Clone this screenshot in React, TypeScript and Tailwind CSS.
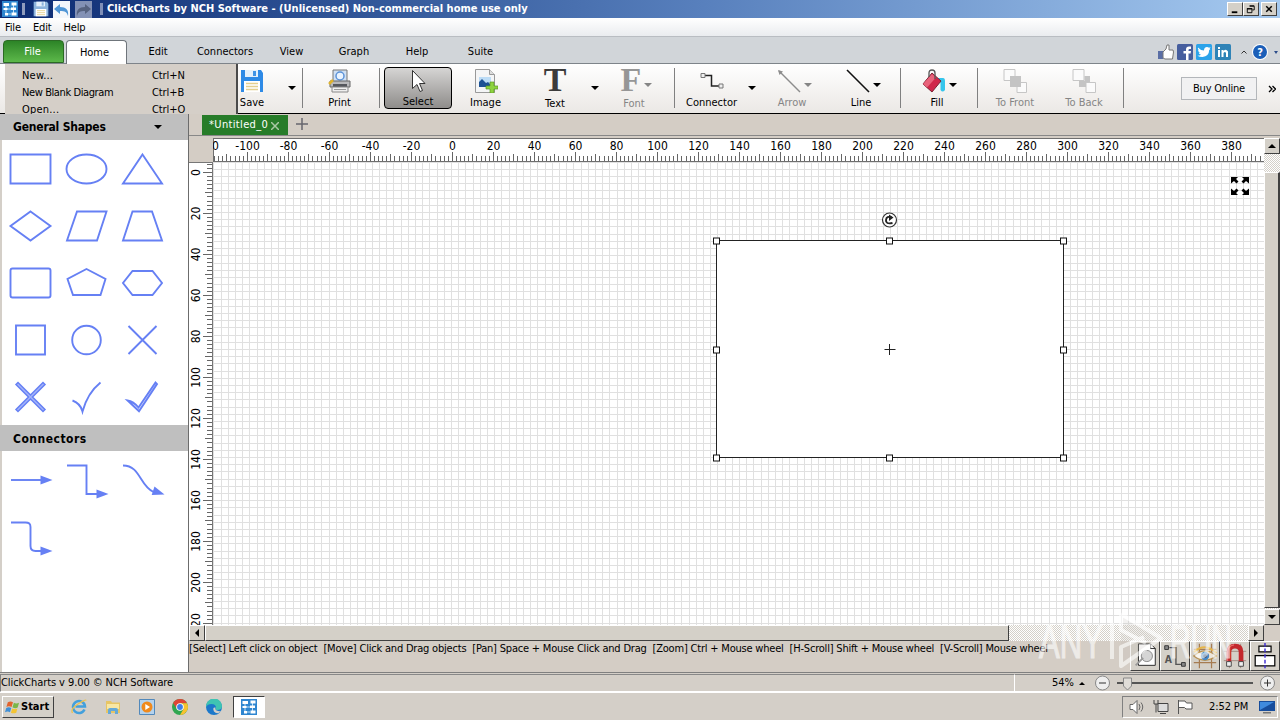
import type { ReactNode } from 'react';
import clsx from 'clsx';

const BLUE = '#6680f4';

const range = (from: number, to: number, step: number) => {
  const out: number[] = [];
  for (let i = from; i <= to; i += step) out.push(i);
  return out;
};

function AppLogo({ className }: { className?: string }) {
  return (
    <svg viewBox="0 0 16 16" className={clsx('shrink-0', className)}>
      <rect width="16" height="16" fill="#2f86d0" />
      <path d="M4 4v10M11.500 3v9M4 8h7M4 13h5" stroke="#bfe0f8" fill="none" />
      <path d="M1.500 2h5.500v3h-5.500zM9.500 1.500h5v3h-5zM1.500 7h4v2h-4zM9 6.500h5v2.500h-5zM9.500 11.500h5v3h-5zM3 12h3v2.500H3z" fill="#fff" />
    </svg>
  );
}

function FloppyIcon({ className, dim }: { className?: string; dim?: boolean }) {
  return (
    <svg viewBox="0 0 24 24" className={clsx('shrink-0', className)}>
      <path d="M1 1h20l2 3v19H1z" fill={dim ? '#8db4dc' : '#2e8ae6'} />
      <path d="M5 1h13v7H5z" fill="#e4f0fb" />
      <path d="M13 2h3v5h-3z" fill={dim ? '#8db4dc' : '#3f93e6'} />
      <path d="M4 12h16v11H4z" fill="#fff" />
      <path d="M6 14.500h12M6 17.500h12M6 20.500h12" stroke="#e3cf8f" strokeWidth="1.300" />
    </svg>
  );
}

function Caret({ className }: { className?: string }) {
  return (
    <svg viewBox="0 0 8 4" className={clsx('h-1 w-2 shrink-0', className)}>
      <path d="M0 0h8L4 4z" fill="currentColor" />
    </svg>
  );
}

function TitleBar() {
  return (
    <div className="flex h-[18px] items-center bg-linear-to-r from-[#0c2a72] via-[#5880bd] via-55% to-[#a6caf0] pl-0.5 pr-[3px]">
      <AppLogo className="h-4 w-4" />
      <div className="ml-1 mr-2 h-3 w-[3px] bg-[#8f9cbd]" />
      <FloppyIcon className="h-4 w-4" dim />
      <svg viewBox="0 0 17 17" className="ml-1 h-[17px] w-[17px]">
        <rect width="17" height="17" fill="#f4f7fb" />
        <path d="M1 8l6-5v3c6 0 9 3 8 9-1-4-3-5-8-5v3z" fill="#5096d6" />
      </svg>
      <svg viewBox="0 0 17 17" className="ml-[5px] h-[17px] w-[17px]">
        <rect width="17" height="17" fill="#8391b5" />
        <path d="M16 8l-6-5v3c-6 0-9 3-8 9 1-4 3-5 8-5v3z" fill="#56627f" />
      </svg>
      <div className="ml-2 mr-1 h-3 w-[3px] bg-[#7f8fb8]" />
      <span className="whitespace-nowrap text-[11px] font-bold text-white">
        ClickCharts by NCH Software - (Unlicensed) Non-commercial home use only
      </span>
      <div className="ml-auto flex">
        <WinButton>
          <path d="M4 10h6" strokeWidth="2" />
        </WinButton>
        <WinButton>
          <path d="M6 3.500h5v4H9M3.500 6.500h5v4h-5zM6 3h5M3 6h6" />
        </WinButton>
        <WinButton className="ml-0.5">
          <path d="M4.500 3.500l6 6M10.500 3.500l-6 6" strokeWidth="1.600" />
        </WinButton>
      </div>
    </div>
  );
}

function WinButton({ children, className }: { children: ReactNode; className?: string }) {
  return (
    <div className={clsx('h-[14px] w-4 border border-b-[#404040] border-l-white border-r-[#404040] border-t-white bg-[#d4d0c8]', className)}>
      <svg viewBox="0 0 15 13" className="h-3 w-[14px]" fill="none" stroke="#000">
        {children}
      </svg>
    </div>
  );
}

function MenuBar() {
  return (
    <div className="flex h-[19px] items-center gap-3 border-b border-[#b9bdc2] bg-linear-to-b from-white to-[#eaecef] pl-[5px] pt-0.5 text-[11px] tracking-[-0.15px]">
      <span>File</span>
      <span>Edit</span>
      <span>Help</span>
    </div>
  );
}

function RibbonTabs() {
  return (
    <div className="flex h-[27px] items-end border-b border-[#7e848a] bg-[#d1d5d9] pl-[3px] text-[11px]">
      <div className="flex h-[23px] w-[61px] items-center justify-center rounded-t border border-[#2b6a24] bg-linear-to-b from-[#2c8427] to-[#5cb84a] pr-0.5 pt-0.5 text-white">
        File
      </div>
      <div className="-mb-px ml-0.5 flex h-6 w-[61px] items-center justify-center rounded-t border border-b-0 border-[#6f757b] bg-white pr-1 pt-px">
        Home
      </div>
      <div className="flex h-[23px] items-center pt-0.5 text-center">
        <span className="w-[62px]">Edit</span>
        <span className="w-[72px]">Connectors</span>
        <span className="w-[61px]">View</span>
        <span className="w-[64px]">Graph</span>
        <span className="w-[62px]">Help</span>
        <span className="w-[65px]">Suite</span>
      </div>
      <div className="mb-[3px] ml-auto flex items-center pr-0.5">
        <svg viewBox="0 0 16 16" className="h-4 w-4">
          <path d="M0 7h5v8H0z" fill="#5a6ea5" />
          <path d="M5 8l3-3 1-4h2v5h4l.500 2-1 7H7l-2-1z" fill="#fff" stroke="#777" />
        </svg>
        <svg viewBox="0 0 16 16" className="ml-[3px] h-4 w-4">
          <rect width="16" height="16" rx="1.500" fill="#465e9e" />
          <path d="M9 16V9.500H6.500V7H9V5.500Q9 2.500 12 2.500h2V5h-1.300q-1.200 0-1.200 1v1H14l-.400 2.500h-2.100V16z" fill="#fff" />
        </svg>
        <svg viewBox="0 0 16 16" className="ml-[3px] h-4 w-4">
          <rect width="16" height="16" rx="1.500" fill="#2ba3ea" />
          <path d="M2 3.500q2.500 3 6 3Q8 3 11 3q1.300 0 2 .800l1.600-.500-1 1.500.900.300-1.300 1Q13 12.500 6.500 13 3.500 13 1.500 11.700q2.300 0 3.500-1-2-.400-2.300-2h1.200Q2 7.500 2 6l1 .300Q1.300 5 2 3.500z" fill="#fff" />
        </svg>
        <svg viewBox="0 0 16 16" className="ml-[3px] h-4 w-4">
          <rect width="16" height="16" rx="1.500" fill="#2f83b7" />
          <path d="M3 6h2v7H3zM3 3h2v2H3zM6.500 6h2v1q2.500-2.500 4.500.500V13h-2V9q-1-2-2.500 0v4h-2z" fill="#fff" />
        </svg>
        <svg viewBox="0 0 6 4" className="ml-[10px] h-1 w-1.5">
          <path d="M.5 3.500L3 1l2.500 2.500" fill="none" stroke="#333" />
        </svg>
        <div className="ml-[6px] flex h-[14px] w-[14px] items-center justify-center rounded-full bg-[#1c5fb8] text-[11px] font-bold leading-none text-white ring-1 ring-white">
          ?
        </div>
        <svg viewBox="0 0 4 3" className="ml-[7px] h-[3px] w-1">
          <path d="M0 0h4L2 3z" fill="#2b4c8a" />
        </svg>
      </div>
    </div>
  );
}

type ToolProps = { label: string; className: string; icon: ReactNode; muted?: boolean; caret?: boolean; active?: boolean };

function Tool({ label, className, icon, muted, caret, active }: ToolProps) {
  return (
    <div
      className={clsx(
        'flex h-[42px] shrink-0 flex-col items-center text-[11px]',
        muted ? 'text-[#858585]' : 'text-black',
        active && 'rounded border border-black bg-linear-to-b from-[#d6d5d4] to-[#8f8d8b]',
        className,
      )}
    >
      <div className={clsx('flex items-center', active ? 'h-[28px]' : 'h-[29px]', caret && 'gap-[3px] pl-1')}>
        {icon}
        {caret && <Caret className="mt-2" />}
      </div>
      <span className="mt-px whitespace-nowrap leading-[13px]">{label}</span>
    </div>
  );
}

function Separator({ className }: { className?: string }) {
  return <div className={clsx('h-10 w-px shrink-0 bg-[#808080]', className)} />;
}

function StackIcon({ front }: { front?: boolean }) {
  return (
    <svg viewBox="0 0 24 24" className="h-6 w-6">
      <path d="M1 .5h11v11H1zM14 13.500h9.500v10H14z" fill="#fbfbfb" stroke="#c6c6c6" />
      <path d={front ? 'M7 7h11v11H7z' : 'M12.500 7H18v6h-4v5H7v-6h5.500z'} fill="#c4c4c4" />
    </svg>
  );
}

function Toolbar() {
  return (
    <div className="flex h-[50px] border-b border-black bg-linear-to-b from-white to-[#ebe8e5]">
      <div className="ml-[5px] flex h-[50px] w-[233px] shrink-0 flex-col overflow-hidden border-r-2 border-[#4a4a4a] bg-[#d5cfc8] pl-[17px] pt-[3px] text-[11px] leading-[17px]">
        {[
          ['New...', 'Ctrl+N'],
          ['New Blank Diagram', 'Ctrl+B'],
          ['Open...', 'Ctrl+O'],
        ].map(([name, key]) => (
          <div key={name} className="flex shrink-0">
            <span className={clsx('w-[130px]', name.length > 10 ? 'tracking-[-0.4px]' : 'tracking-[0.2px]')}>{name}</span>
            <span className="tracking-[-0.1px]">{key}</span>
          </div>
        ))}
      </div>
      <div className="flex grow items-center pb-0.5">
        <Tool label="Save" className="w-[28px]" icon={<FloppyIcon className="h-6 w-6" />} />
        <Caret className="ml-[22px] mr-[6px]" />
        <Separator />
        <Tool
          label="Print"
          className="w-[73px]"
          icon={
            <svg viewBox="0 0 24 24" className="h-6 w-6">
              <path d="M5 1h14v12H5z" fill="#cfe0f4" stroke="#777" />
              <circle cx="12" cy="7" r="4" fill="#eaf4ff" stroke="#5c93d8" strokeWidth="1.500" />
              <path d="M2 12h20v6H2z" fill="#b9b9bb" stroke="#666" />
              <path d="M5 15h14v3H5z" fill="#55575c" />
              <path d="M4 18h16v5H4z" fill="#efefef" stroke="#888" />
              <path d="M6 20.500h12" stroke="#999" />
              <path d="M1 15l4-4" stroke="#e0b32c" strokeWidth="2.500" />
            </svg>
          }
        />
        <Separator className="ml-[3px] mr-1" />
        <Tool
          label="Select"
          active
          className="w-[68px]"
          icon={
            <svg viewBox="0 0 16 24" className="h-6 w-4">
              <path d="M2.500 1.500v18l4.500-4 3 7 2.500-1-3-7H15z" fill="#fff" stroke="#333" />
            </svg>
          }
        />
        <Tool
          label="Image"
          className="w-[67px]"
          icon={
            <svg viewBox="0 0 24 24" className="h-6 w-6">
              <path d="M1.500.5h14l5 5v18h-19z" fill="#f4f5f6" stroke="#999" />
              <path d="M15.500.5v5h5" fill="#ddd" stroke="#999" />
              <path d="M5 8h12v10H5z" fill="#bcdcf6" />
              <path d="M5 18v-5l3-3 4 4 2-1 3 3v2z" fill="#1d5293" />
              <path d="M16 13h4v4h4v3h-4v4h-4v-4h-4v-3h4z" fill="#8ed33f" stroke="#5d9a24" strokeWidth=".7" />
            </svg>
          }
        />
        <Tool
          label="Text"
          className="w-[72px]"
          icon={<span className="mb-1 font-['Liberation_Serif',serif] text-[34px] font-bold leading-[25px] text-[#3b3b3b]">T</span>}
        />
        <Caret className="mr-1" />
        <Tool
          label="Font"
          muted
          caret
          className="w-[62px]"
          icon={<span className="mb-1 w-5 text-center font-['Liberation_Serif',serif] text-[34px] font-bold leading-[25px] text-[#969696]">F</span>}
        />
        <Separator className="ml-[9px]" />
        <Tool
          label="Connector"
          className="w-[73px]"
          icon={
            <svg viewBox="0 0 24 24" className="h-6 w-6" fill="none" stroke="#222">
              <path d="M5 6.500h6.500V17H19" strokeWidth="1.500" />
              <path d="M1 4.500h4v4H1zM19 15h4v4h-4z" stroke="#777" fill="#eee" />
            </svg>
          }
        />
        <Caret />
        <Tool
          label="Arrow"
          muted
          caret
          className="w-[72px]"
          icon={
            <svg viewBox="0 0 24 24" className="h-6 w-6">
              <path d="M2 2l21 21" stroke="#8c8c8c" strokeWidth="1.500" />
              <path d="M1 1l5 1.500L2.500 6z" fill="#8c8c8c" />
            </svg>
          }
        />
        <Tool
          label="Line"
          caret
          className="w-[66px]"
          icon={
            <svg viewBox="0 0 24 24" className="h-6 w-6">
              <path d="M1 1l22 22" stroke="#111" strokeWidth="1.600" />
            </svg>
          }
        />
        <Separator className="ml-[6px]" />
        <Tool
          label="Fill"
          caret
          className="w-[72px]"
          icon={
            <svg viewBox="0 0 24 24" className="h-6 w-6">
              <path d="M16 9h5q2 0 2 3v9q-2.500 3-4.500 0v-7z" fill="#35c5ec" />
              <path d="M10 4l9 8-9 11-9-8z" fill="#d02749" stroke="#7a2334" />
              <path d="M10 5l4 3.500-9 10-4-3.500z" fill="#e8637b" />
              <path d="M7 8V4q0-3 3-3t3 3v6" fill="none" stroke="#555" strokeWidth="1.300" />
            </svg>
          }
        />
        <Separator className="ml-1" />
        <Tool label="To Front" muted className="w-[74px]" icon={<StackIcon front />} />
        <Tool label="To Back" muted className="w-[64px]" icon={<StackIcon />} />
        <Separator className="ml-[7px]" />
        <button className="ml-[57px] mt-0.5 h-[23px] w-[76px] shrink-0 border border-[#b3b6ba] bg-[#f1f1f2] pt-px text-[11px] tracking-[-0.2px]">
          Buy Online
        </button>
        <svg viewBox="0 0 8 8" className="ml-[11px] mt-0.5 h-2 w-2 shrink-0">
          <path d="M1 1l3 3-3 3M4.500 1l3 3-3 3" fill="none" stroke="#000" strokeWidth="1.300" />
        </svg>
      </div>
    </div>
  );
}

const shapes: ReactNode[] = [
  <path d="M-20-14.500h40v29h-40z" />,
  <ellipse rx="20" ry="14.500" />,
  <path d="M0-14.500L19.500 14.500h-39z" />,
  <path d="M0-14.500L20 0 0 14.500-20 0z" />,
  <path d="M-9.500-14.500H20L10.500 14.500h-30z" />,
  <path d="M-10-14.500H9.500L19.500 14.500h-39z" />,
  <rect x="-20" y="-14.500" width="40" height="29" rx="2" />,
  <path d="M0-14L19-4 14 12h-27.500L-19-4z" />,
  <path d="M-10-12H10L19.500 0 10 12h-20L-19.500 0z" />,
  <path d="M-14.500-14.500h29v29h-29z" />,
  <circle r="14.300" />,
  <path d="M-14-14l28 28M14-14l-28 28" />,
  <path strokeWidth="1.500" d="M-12.500-14.500L0-2 12.500-14.500l2 2L2 0l12.500 12.500-2 2L0 2-12.500 14.500l-2-2L-2 0l-12.500-12.500z" fill="#a3b3fa" />,
  <path d="M-14 3.500q8 3 10 11Q1-4 14-14.500" />,
  <path d="M-15 3.500q6 1 11 7L13-14.500l1.500 1.500L-3.500 14.300z" fill="#dbe1fd" />,
];

function Arrowhead({ x, y, rotate = 0 }: { x: number; y: number; rotate?: number }) {
  return <path d="M0 0l-12-4.500v9z" fill={BLUE} stroke="none" transform={`translate(${x} ${y}) rotate(${rotate})`} />;
}

const connectors: ReactNode[] = [
  <>
    <path d="M-19.500 0H12" />
    <Arrowhead x={22} y={0} />
  </>,
  <>
    <path d="M-19.500-14.500H0v28.500h12" />
    <Arrowhead x={22} y={14} />
  </>,
  <>
    <path d="M-19.500-14.500C-2-14.500-3 6 11 12" />
    <Arrowhead x={22} y={14.5} rotate={18} />
  </>,
  <>
    <path d="M-19.500-14.500H-5Q0-14.500 0-10V9q0 5 5 5h7" />
    <Arrowhead x={22} y={14} />
  </>,
];

function ShapeGrid({ items }: { items: ReactNode[] }) {
  return (
    <div className="grid grid-cols-[56px_56px_56px]">
      {items.map((item, i) => (
        <svg key={i} viewBox="-28.500 -29 56 57" className="h-[57px] w-14" fill="none" stroke={BLUE} strokeWidth="1.900">
          {item}
        </svg>
      ))}
    </div>
  );
}

function Sidebar() {
  return (
    <div className="flex h-[558px] w-[189px] shrink-0 flex-col border-r border-[#6c6c6c] bg-white">
      <div className="flex h-[26px] shrink-0 items-center bg-[#bfbfbf] pl-[13px] text-[12px] font-bold tracking-[-0.2px]">
        General Shapes
        <Caret className="ml-auto mr-[26px]" />
      </div>
      <div className="border-l-2 border-[#d4cfc8]">
        <ShapeGrid items={shapes} />
      </div>
      <div className="flex h-[26px] shrink-0 items-center bg-[#bfbfbf] pl-[13px] pt-px text-[12px] font-bold tracking-[0.5px]">Connectors</div>
      <div className="grow border-l-2 border-[#d4cfc8]">
        <ShapeGrid items={connectors} />
      </div>
    </div>
  );
}

const UNIT = 2.05;

function tickLength(value: number) {
  if (value % 20 === 0) return 9;
  if (value % 10 === 0) return 7;
  return 5;
}

function HorizontalRuler() {
  return (
    <svg viewBox="213 138 1051 24" className="h-6 w-[1051px] bg-white text-[12px]" shapeRendering="crispEdges">
      <path d="M213 138.500h1051M213 161.500h1051M213.500 138v24" stroke="#6f6f6f" />
      {range(-116, 394, 2).map((v) => {
        const x = Math.floor(452.300 + v * UNIT) + 0.5;
        return <path key={v} d={`M${x} 161v-${tickLength(v)}`} stroke="#666" />;
      })}
      {range(-120, 380, 20).map((v) => (
        <text key={v} x={452.500 + v * UNIT} y="150" textAnchor="middle">
          {v}
        </text>
      ))}
    </svg>
  );
}

function VerticalRuler() {
  return (
    <svg viewBox="189 162 24 463" className="h-[463px] w-6 bg-white text-[12px]" shapeRendering="crispEdges">
      <path d="M189 162.500h24M212.500 162v463" stroke="#777" />
      {range(-4, 220, 2).map((v) => {
        const y = Math.floor(172.300 + v * UNIT) + 0.5;
        return <path key={v} d={`M212 ${y}h-${tickLength(v)}`} stroke="#666" />;
      })}
      {range(0, 220, 20).map((v) => (
        <text key={v} textAnchor="middle" transform={`translate(200 ${172.500 + v * UNIT}) rotate(-90)`}>
          {v}
        </text>
      ))}
    </svg>
  );
}

// grid pitch is fractional, lines are snapped to whole pixels
const gridX = range(0, 145, 1).map((i) => Math.floor(1063.400 + (i - 118) * 7.2) + 0.5);
const gridY = range(0, 64, 1).map((i) => Math.floor(457.400 + (i - 41) * 7.2) + 0.5);

const handles = [
  [716.500, 240.500],
  [889.500, 240.500],
  [1063.500, 240.500],
  [716.500, 349.500],
  [1063.500, 349.500],
  [716.500, 457.500],
  [889.500, 457.500],
  [1063.500, 457.500],
];

function Canvas() {
  return (
    <svg viewBox="213 162 1051 463" className="h-[463px] w-[1051px] bg-white">
      <path
        d={gridX.map((x) => `M${x} 162v463`).join('') + gridY.map((y) => `M213 ${y}h1051`).join('')}
        stroke="#e0e0e0"
        fill="none"
      />
      <rect x="716.500" y="240.500" width="347" height="217" fill="#fff" stroke="#222" />
      {handles.map(([x, y]) => (
        <rect key={`${x}-${y}`} x={x - 3} y={y - 2.500} width="6" height="6" fill="#fff" stroke="#111" />
      ))}
      <path d="M884.500 349.500h11M889.500 344v11" stroke="#222" />
      <circle cx="889.500" cy="220" r="7" fill="#fff" stroke="#333" strokeWidth="1.200" />
      <path d="M891.500 217.500q-5-2-5.500 2.500t6.500 3" fill="none" stroke="#222" strokeWidth="1.900" />
      <path d="M889 214.500l4.500 3-4.500 3.500z" fill="#222" />
      <g fill="#000">
        <path d="M1231 177h7l-2 2 2.500 2.500-2 2-2.500-2.500-3 2.500z" />
        <path d="M1249 177h-7l2 2-2.500 2.500 2 2 2.500-2.500 3 2.500z" />
        <path d="M1231 195h7l-2-2 2.500-2.500-2-2-2.500 2.500-3-2.500z" />
        <path d="M1249 195h-7l2-2-2.500-2.500 2-2 2.500 2.500 3-2.500z" />
      </g>
    </svg>
  );
}

const DITHER = 'bg-[repeating-conic-gradient(#fff_0_25%,#d4d0c8_0_50%)] bg-size-[2px_2px]';
const RAISED = 'border border-b-[#404040] border-l-white border-r-[#404040] border-t-white bg-[#d4d0c8]';

function ScrollButton({ path, className }: { path: string; className: string }) {
  return (
    <div className={clsx('flex shrink-0 items-center justify-center', RAISED, className)}>
      <svg viewBox="0 0 8 8" className="h-2 w-2">
        <path d={path} />
      </svg>
    </div>
  );
}

function DocumentArea() {
  return (
    <div className="flex grow flex-col bg-[#d4cdc5]">
      <div className="flex h-[22px] items-end border-b border-[#888] pl-[13px]">
        <div className="flex h-[20px] w-[86px] items-center bg-[#277c29] pl-[7px] pt-px text-[11px] tracking-[0.35px] text-white">
          *Untitled_0
          <svg viewBox="0 0 8 8" className="ml-[3px] h-2 w-2">
            <path d="M0 0l8 8M8 0L0 8" stroke="#a9c8a4" strokeWidth="1.500" />
          </svg>
        </div>
        <svg viewBox="0 0 12 12" className="mb-[5px] ml-2 h-3 w-3">
          <path d="M6 0v12M0 6h12" stroke="#66666e" strokeWidth="1.500" />
        </svg>
      </div>
      <div className="flex h-[489px] pt-0.5">
        <div className="w-6 shrink-0">
          <div className="h-6" />
          <VerticalRuler />
        </div>
        <div className="w-[1051px] shrink-0">
          <HorizontalRuler />
          <Canvas />
        </div>
        <div className={clsx('flex w-4 flex-col', DITHER)}>
          <ScrollButton className="h-4 w-4" path="M0 6h8L4 2z" />
          <div className={clsx('mt-[18px] h-[436px] w-4 border-r-2', RAISED)} />
          <ScrollButton className="mt-auto h-4 w-4" path="M0 2h8L4 6z" />
        </div>
      </div>
      <div className="flex h-4">
        <div className={clsx('flex w-[1075px]', DITHER)}>
          <ScrollButton className="h-4 w-4" path="M6 0v8L2 4z" />
          <div className={clsx('h-4 w-[804px]', RAISED)} />
          <ScrollButton className="ml-auto h-4 w-4" path="M2 0v8l4-4z" />
        </div>
      </div>
      <div className="flex h-[31px]">
        <span className="w-[900px] whitespace-pre text-[11px] leading-[15px] tracking-[-0.2px]">
          {'[Select] Left click on object  [Move] Click and Drag objects  [Pan] Space + Mouse Click and Drag  [Zoom] Ctrl + Mouse wheel  [H-Scroll] Shift + Mouse wheel  [V-Scroll] Mouse wheel'}
        </span>
        <ViewButtons />
      </div>
    </div>
  );
}

function ViewButtons() {
  const icons: ReactNode[] = [
    <>
      <path d="M8 2h13l5 5v18H8z" fill="#fff" stroke="#222" />
      <path d="M21 2v5h5" fill="none" stroke="#222" />
      <circle cx="17" cy="15" r="6" fill="#d5d5d5" stroke="#888" />
      <path d="M5 25l8-8" stroke="#999" strokeWidth="2" />
    </>,
    <>
      <path d="M9 6h7v18h7" fill="none" stroke="#555" strokeWidth="1.500" />
      <path d="M4 4h4v4H4zM22 22h4v4h-4z" fill="#888" stroke="#333" />
      <text x="4" y="22" fontSize="11" fontWeight="bold" fill="#555">A</text>
    </>,
    <>
      <path d="M9 2v26M22 2v26M3 8h24M3 22h24" stroke="#a67c52" strokeWidth="1.300" />
      <path d="M3 15q12-11 24 0-12 9-24 0z" fill="#eee6d8" stroke="#ba9350" strokeWidth="1.500" />
      <circle cx="15" cy="15" r="4.500" fill="#4688c4" />
      <circle cx="15" cy="15" r="2" fill="#153c6c" />
      <path d="M3 11q12-11 24 1" stroke="#e6b64a" strokeWidth="2" fill="none" />
    </>,
    <>
      <path d="M3 10h24M3 20h24M9 2v26M21 2v26" stroke="#a18b80" />
      <path d="M8.500 22V11q0-6.500 6.500-6.500t6.500 6.500v11" fill="none" stroke="#c3282d" strokeWidth="5" />
      <path d="M7 22V11q0-7 7-8" fill="none" stroke="#e8696b" strokeWidth="1.300" />
      <path d="M6 21h5v5H6zM19 21h5v5h-5z" fill="#eee" stroke="#444" />
    </>,
    <>
      <path d="M8.500 4.500h13v6h-13zM4.500 14.500h21v11h-21z" fill="#fff" stroke="#000" strokeWidth="1.300" />
      <path d="M15 1v27" stroke="#3c2ad0" strokeWidth="1.500" strokeDasharray="4 2" />
    </>,
  ];
  return (
    <div className="ml-auto flex">
      {icons.map((icon, i) => (
        <div key={i} className={clsx('h-[30px] w-[30px]', RAISED)}>
          <svg viewBox="0 0 30 30" className="h-7 w-7">
            {icon}
          </svg>
        </div>
      ))}
    </div>
  );
}

function StatusBar() {
  return (
    <div className="flex h-[20px] items-end border-t border-[#808080] bg-[#d4cfc8] text-[11px]">
      <div className="flex h-[18px] w-[1015px] items-center border border-b-white border-l-[#808080] border-r-white border-t-[#888] pt-px tracking-[-0.08px]">
        ClickCharts v 9.00 © NCH Software
      </div>
      <div className="flex h-[18px] grow items-center border-b border-t border-b-white border-t-[#888]">
        <span className="ml-[37px] w-[22px] pt-px">54%</span>
        <svg viewBox="0 0 6 3" className="ml-[5px] h-[3px] w-1.5">
          <path d="M0 3h6L3 0z" />
        </svg>
        <svg viewBox="0 0 185 16" className="ml-[10px] h-4 w-[185px]" fill="none" stroke="#666">
          <circle cx="7.500" cy="8" r="7" fill="#eee" stroke="#888" />
          <path d="M4 8h7" stroke="#333" />
          <path d="M22 8h136" stroke="#555" strokeWidth="2" />
          <path d="M28.500 3h8v8l-4 4-4-4z" fill="#e0ddd8" stroke="#888" />
          <circle cx="172.500" cy="8" r="7" fill="#eee" stroke="#888" />
          <path d="M169 8h7M172.500 4.500v7" stroke="#333" />
        </svg>
      </div>
    </div>
  );
}

function TaskBar() {
  return (
    <div className="flex h-7 items-center border-t border-white bg-[#d4cfc8] pl-0.5">
      <div className={clsx('flex h-[22px] w-[52px] items-center pl-0.5 text-[11px] font-bold', RAISED)}>
        <svg viewBox="0 0 16 14" className="mr-px h-[14px] w-[15px]">
          <path d="M3 2q3-2 5.500 0L7 7Q4 5.500 1.500 7z" fill="#e2632d" />
          <path d="M9.500 2.500Q12 4 15 2.500L13.500 7.500Q11 9 8 7.300z" fill="#7ab648" />
          <path d="M1.300 8Q4 6.500 6.700 8L5.300 12.500Q3 11 0 12.500z" fill="#3f8fd6" />
          <path d="M7.700 8.500q3 1.500 5.500 0L12 13q-3 1.500-5.700 0z" fill="#f3c433" />
        </svg>
        <span className="pt-0.5">Start</span>
      </div>
      <svg viewBox="0 0 16 16" className="ml-[17px] h-4 w-4">
        <path d="M13.500 10.500A6 6 0 1 1 14 7.500H4.500" fill="none" stroke="#43a0dc" strokeWidth="2.500" />
        <path d="M1.500 14Q-1 10 7 5t8-3.500" fill="none" stroke="#edc24e" strokeWidth="1.300" />
      </svg>
      <svg viewBox="0 0 16 16" className="ml-[18px] h-4 w-4">
        <path d="M1 2h5l1 1.500h8V14H1z" fill="#e7c565" />
        <path d="M2 5h12v5H2z" fill="#f8e7a4" />
        <path d="M3 15v-4q0-2 2-2h6q2 0 2 2v4h-3v-3H6v3z" fill="#65a9d8" />
      </svg>
      <svg viewBox="0 0 16 16" className="ml-[18px] h-4 w-4">
        <path d="M.5.5h15v15H.5z" fill="#b4d2ed" stroke="#5289bb" />
        <circle cx="8" cy="8" r="5.500" fill="#f08a1d" />
        <path d="M6.300 5v6L11 8z" fill="#fff" />
      </svg>
      <svg viewBox="0 0 16 16" className="ml-[17px] h-4 w-4">
        <circle cx="8" cy="8" r="8" fill="#2fa650" />
        <path d="M1.100 4A8 8 0 0 1 15 4.200H8L5 10z" fill="#de4536" />
        <path d="M15 4.200A8 8 0 0 1 8 16l3.500-6L8 4.200z" fill="#f8c22e" />
        <circle cx="8" cy="8" r="3.800" fill="#fff" />
        <circle cx="8" cy="8" r="2.900" fill="#3c7ee8" />
      </svg>
      <svg viewBox="0 0 16 16" className="ml-[18px] h-4 w-4">
        <circle cx="8" cy="8" r="8" fill="#1c78ca" />
        <path d="M0 8A8 8 0 0 1 16 7q0 4-5 4-2.500 0-1-2 0-4-4.500-4Q1.500 5 0 8z" fill="#3fc4b2" />
        <path d="M9.500 8.500Q8 12 15 12.500 11 16 8 12.500 6 8 9.500 8.500z" fill="#d4cfc8" />
      </svg>
      <div className="ml-[11px] flex h-[22px] w-8 items-center justify-center border border-b-white border-l-[#404040] border-r-white border-t-[#404040] bg-white">
        <AppLogo className="h-4 w-4" />
      </div>
      <div className="ml-auto mr-0.5 flex h-[22px] w-[156px] items-center border border-b-white border-l-[#808080] border-r-white border-t-[#808080]">
        <svg viewBox="0 0 16 16" className="ml-[6px] h-4 w-4" fill="none" stroke="#666">
          <path d="M1 5.500h3l4-4v13l-4-4H1z" fill="#fff" />
          <path d="M10 5q2 3 0 6M12 3.500q3.500 4.500 0 9" />
        </svg>
        <svg viewBox="0 0 16 16" className="ml-2 h-4 w-4" fill="none" stroke="#444">
          <path d="M5 4.500h10v8H5z" fill="#ddd" />
          <path d="M1 1v4h4V1M3 5v8.500M7 14.500h6" />
        </svg>
        <svg viewBox="0 0 16 16" className="ml-2 h-4 w-4">
          <path d="M1.500 1v14M2 2h6l1.500 2H15v6H9L7.500 8.500H2" fill="#fff" stroke="#555" />
        </svg>
        <span className="ml-[16px] w-[42px] whitespace-nowrap pt-px text-[11px] tracking-[-0.1px]">2:52 PM</span>
        <svg viewBox="0 0 16 14" className="ml-2 h-[14px] w-4">
          <path d="M0 1h16v10H0z" fill="#174d9c" />
          <path d="M1 2h14L1 10z" fill="#3f8ade" />
          <path d="M4 12h8v1.500H4z" fill="#777" />
        </svg>
      </div>
    </div>
  );
}

function Watermark() {
  return (
    <svg viewBox="0 0 200 60" className="absolute left-[1037px] top-[611px] h-[60px] w-[200px] font-['Liberation_Sans',sans-serif]" opacity=".6">
      <g fill="#fff" stroke="#fff" strokeWidth="1.200" fontSize="48">
        <text x="2" y="47" textLength="64" lengthAdjust="spacingAndGlyphs">ANY</text>
        <text x="133" y="47" textLength="62" lengthAdjust="spacingAndGlyphs">RUN</text>
      </g>
      <path d="M84 3l40 24-40 28z" fill="#c4c0ba" fillOpacity=".35" />
      <g fill="none" stroke="#fff" strokeWidth="4" strokeLinejoin="round">
        <path d="M75 12v36M84 4v15l25 13M84 3l40 24-40 28V36l23-10" />
      </g>
    </svg>
  );
}

export default function App() {
  return (
    <div className="relative flex h-[720px] w-[1280px] flex-col overflow-hidden bg-[#d4cfc8] font-['DejaVu_Sans_Condensed','DejaVu_Sans',sans-serif] text-[11px] text-black [font-stretch:condensed]">
      <TitleBar />
      <MenuBar />
      <RibbonTabs />
      <Toolbar />
      <div className="flex h-[558px]">
        <Sidebar />
        <DocumentArea />
      </div>
      <StatusBar />
      <TaskBar />
      <Watermark />
    </div>
  );
}
